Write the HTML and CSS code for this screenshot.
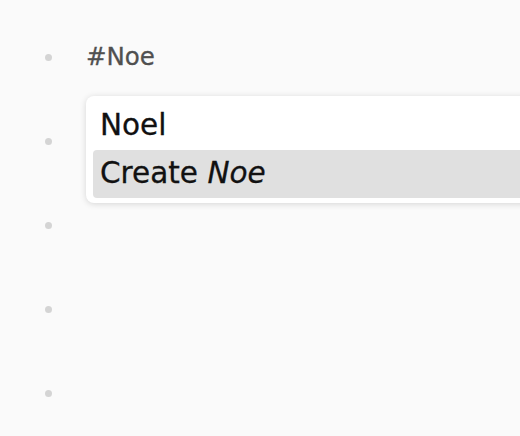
FILE: index.html
```html
<!DOCTYPE html>
<html>
<head>
<meta charset="utf-8">
<link rel="stylesheet" href="styles.css">
</head>
<body>
<div class="outline">
  <div class="row">
    <span class="bullet"></span>
    <div class="content">
      <span class="tag">#Noe</span>
      <div class="popup">
        <div class="item">Noel</div>
        <div class="item active">Create <em>Noe</em></div>
      </div>
    </div>
  </div>
  <div class="row"><span class="bullet"></span><div class="content"></div></div>
  <div class="row"><span class="bullet"></span><div class="content"></div></div>
  <div class="row"><span class="bullet"></span><div class="content"></div></div>
  <div class="row"><span class="bullet"></span><div class="content"></div></div>
</div>
</body>
</html>
```

FILE: styles.css
```css
html, body {
  margin: 0;
  padding: 0;
  background: #fafafa;
  width: 520px;
  height: 436px;
  overflow: hidden;
  font-family: "DejaVu Sans", sans-serif;
}
.outline {
  display: flex;
  flex-direction: column;
  padding-top: 15px;
  width: 520px;
  overflow: hidden;
}
.row {
  display: flex;
  align-items: flex-start;
  height: 84px;
}
.bullet {
  width: 7px;
  height: 7px;
  border-radius: 50%;
  background: #d4d4d4;
  margin-left: 45px;
  margin-top: 39px;
  flex: none;
}
.content {
  position: relative;
  margin-left: 34px;
  flex: 1;
}
.tag {
  display: block;
  font-size: 24.5px;
  color: #505050;
  line-height: 32px;
  margin-top: 26px;
  -webkit-text-stroke: 0.3px #505050;
}
.popup {
  position: absolute;
  left: 0;
  top: 81px;
  width: 460px;
  background: #fff;
  border-radius: 8px;
  box-shadow: 0 1px 6px rgba(0,0,0,0.15);
  padding: 6px 0 5px 7px;
  z-index: 2;
}
.item {
  height: 48px;
  line-height: 46px;
  font-size: 29.5px;
  color: #111;
  padding-left: 7px;
  border-radius: 4px 0 0 4px;
  -webkit-text-stroke: 0.3px #111;
}
.item.active {
  background: #e0e0e0;
}
.item em {
  font-style: italic;
}
```
